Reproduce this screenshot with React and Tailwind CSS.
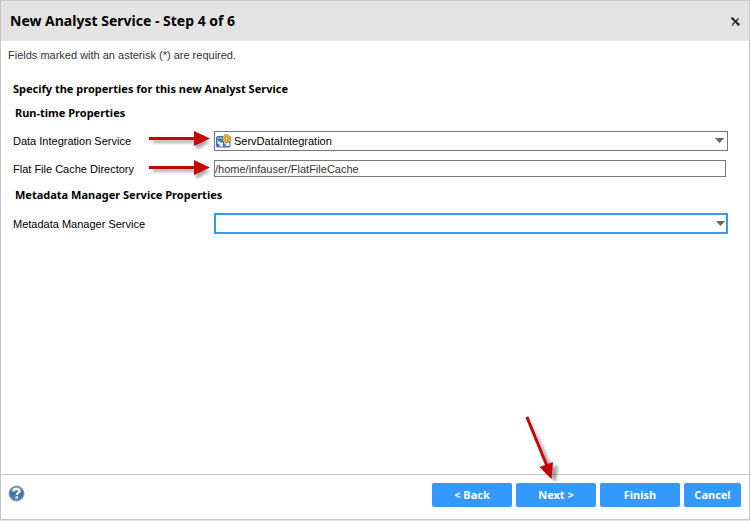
const buttons = [
  ["< Back", "w-20"],
  ["Next >", "w-20"],
  ["Finish", "w-20"],
  ["Cancel", "w-[57px]"],
];

function Arrow() {
  return (
    <svg className="pointer-events-none absolute left-[136px] top-0 z-10 overflow-visible" width="64" height="20" viewBox="0 0 64 20" aria-hidden="true">
      <path d="M4 9h43V6l14 5-14 8V12H4z" fill="#555" opacity="0.5" style={{ filter: "blur(1.5px)" }} />
      <path d="M0 6h45V0l16 7.500L45 15V9H0z" fill="#c40606" />
    </svg>
  );
}

function NextArrow() {
  return (
    <svg className="pointer-events-none absolute bottom-[27px] left-[9px] overflow-visible" width="30" height="64" viewBox="0 0 30 64" aria-hidden="true">
      <path d="M5 3 26 50l6-2-2 17-12-11 4-2z" transform="translate(1 1)" fill="#555" opacity="0.55" style={{ filter: "blur(1.5px)" }} />
      <path d="M.5 1.500 3.300.3 22.700 48 28 46 26.500 63 14.500 51l5.500-2z" fill="#c40606" />
    </svg>
  );
}

function Caret({ className }) {
  return (
    <svg className={`pointer-events-none absolute ${className}`} width="9" height="5" viewBox="0 0 9 5" aria-hidden="true">
      <path d="M0 0h9L4.500 5z" fill="#666" />
    </svg>
  );
}

function CloseIcon() {
  return (
    <svg width="9" height="9" viewBox="0 0 9 9" aria-hidden="true">
      <path d="M.5.5l7 7" fill="none" stroke="#222" strokeWidth="2" />
      <path d="M7.500 1.500l-6 6" fill="none" stroke="#222" strokeWidth="1.300" />
      <path d="M5.500 8.500h3V6zM.5 8.500h2.500L1.500 7z" fill="#222" />
    </svg>
  );
}

function ServiceIcon() {
  return (
    <svg className="pointer-events-none absolute left-[2px] top-[3px]" width="16" height="14" viewBox="0 0 16 14" aria-hidden="true">
      <rect x="0" y="2" width="14.500" height="11.500" rx="2" fill="#2f72c4" />
      <path d="M1 3h5v2H1z" fill="#6fa6e0" />
      <path d="M1.500 9.500 1.500 6l4.500 3 1-1v4.500H3l1-1.500zM8 7.500l2.500 2 2-1.500 1 1v3H9l1-1.500-2-1.500z" fill="#fff" />
      <circle cx="10.500" cy="4.500" r="4" fill="#f4b62f" stroke="#b57a18" strokeDasharray="1.800 1.300" />
      <circle cx="10.500" cy="4.500" r="1.500" fill="#fff" stroke="#7a5420" strokeWidth="0.800" />
    </svg>
  );
}

function SectionTitle({ children }) {
  return <h2 className="ml-[2px] font-['Noto_Sans',sans-serif] text-[11px] leading-4 font-bold">{children}</h2>;
}

function Row({ id, label, arrow, children }) {
  return (
    <div className="relative flex items-center">
      <label htmlFor={id} className="w-[201px] shrink-0 text-[11px] leading-4">
        {label}
      </label>
      {arrow ? <Arrow /> : null}
      <div className="relative min-w-0 flex-1">{children}</div>
    </div>
  );
}

export default function App() {
  return (
    <div className="flex min-h-screen flex-col bg-[#e6e6e6] pb-px font-['Liberation_Sans',Arial,sans-serif] text-black">
      <main className="flex flex-1 flex-col border border-[#c6c6c6] bg-white">
        <header className="flex h-10 items-center justify-between bg-[#e4e4e4] pr-[9px] pl-[9px]">
          <h1 className="font-['Noto_Sans',sans-serif] text-sm font-bold">New Analyst Service - Step 4 of 6</h1>
          <button type="button" aria-label="Close">
            <CloseIcon />
          </button>
        </header>

        <form id="service" className="flex-1 pt-[6px] pr-[21px] pl-3">
          <p className="-ml-[5px] text-[11px] leading-4 text-[#333]">Fields marked with an asterisk (*) are required.</p>
          <p className="mt-[18px] mb-2 font-['Noto_Sans',sans-serif] text-[11px] leading-4 font-bold">
            Specify the properties for this new Analyst Service
          </p>

          <SectionTitle>Run-time Properties</SectionTitle>
          <div className="mt-[10px] mb-[10px] flex flex-col gap-[9px]">
            <Row id="integration" label="Data Integration Service" arrow>
              <ServiceIcon />
              <select id="integration" className="block h-5 w-full appearance-none rounded-none border border-[#777] pr-5 pl-[19px] text-[11px] outline-none">
                <option>ServDataIntegration</option>
              </select>
              <Caret className="top-[7px] right-1" />
            </Row>
            <Row id="directory" label="Flat File Cache Directory" arrow>
              <div className="pr-[2px]">
                <input id="directory" defaultValue="/home/infauser/FlatFileCache" className="block h-[17px] w-full border border-[#777] text-[11px] text-[#333] outline-none" />
              </div>
            </Row>
          </div>

          <SectionTitle>Metadata Manager Service Properties</SectionTitle>
          <div className="mt-[10px]">
            <Row id="metadata" label="Metadata Manager Service">
              <select id="metadata" className="block h-[21px] w-full appearance-none rounded-none border-2 border-[#3399ff] text-[11px] outline-none" />
              <Caret className="top-2 right-[3px]" />
            </Row>
          </div>
        </form>

        <footer className="flex items-start justify-between border-t border-[#c6c6c6] pt-2 pr-2 pb-3 pl-[7px]">
          <button type="button" aria-label="Help" className="pt-[2px]">
            <svg width="17" height="17" viewBox="0 0 17 17" aria-hidden="true">
              <defs>
                <linearGradient id="helpFill" x1="0" y1="0" x2="0" y2="1">
                  <stop offset="0" stopColor="#7fa3c6" />
                  <stop offset="0.5" stopColor="#3d6f9f" />
                  <stop offset="1" stopColor="#5f93c0" />
                </linearGradient>
              </defs>
              <circle cx="8.500" cy="8.500" r="7.500" fill="url(#helpFill)" stroke="#8a9bab" />
              <path d="M5.500 6.500C5.500 3 11.500 3.200 11.500 6.200 11.500 8 8.700 8 8.700 10" fill="none" stroke="#fff" strokeWidth="2.200" />
              <rect x="7.500" y="11.300" width="2.400" height="2.200" fill="#fff" />
            </svg>
          </button>
          <div className="flex gap-1">
            {buttons.map(([label, width]) => (
              <div key={label} className="relative">
                {label === "Next >" ? <NextArrow /> : null}
                <button type="button" className={`block h-6 rounded-xs bg-[#3399ff] font-['Noto_Sans',sans-serif] text-[11px] font-bold text-white ${width}`}>
                  {label}
                </button>
              </div>
            ))}
          </div>
        </footer>
      </main>
    </div>
  );
}
